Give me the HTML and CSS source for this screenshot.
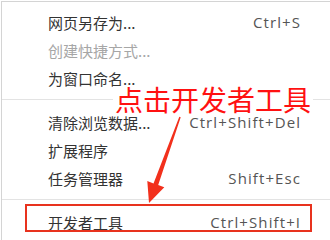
FILE: index.html
```html
<!DOCTYPE html>
<html lang="zh-CN">
<head>
<meta charset="utf-8">
<title>菜单</title>
<link rel="stylesheet" href="styles.css">
</head>
<body>
<div class="menu">
  <div class="item"><span class="label">网页另存为...</span><span class="key">Ctrl+S</span></div>
  <div class="item disabled"><span class="label">创建快捷方式...</span></div>
  <div class="item"><span class="label">为窗口命名...</span></div>
  <div class="sep"></div>
  <div class="item"><span class="label">清除浏览数据...</span><span class="key">Ctrl+Shift+Del</span></div>
  <div class="item"><span class="label">扩展程序</span></div>
  <div class="item"><span class="label">任务管理器</span><span class="key">Shift+Esc</span></div>
  <div class="sep"></div>
  <div class="item"><span class="label">开发者工具</span><span class="key">Ctrl+Shift+I</span></div>
</div>
<div class="callout">点击开发者工具</div>
<svg class="arrow" width="330" height="240" viewBox="0 0 330 240">
  <polygon points="179.3,116.8 180.7,117.2 158.2,185.0 164.3,187.3 149,203 147.3,181.1 153.5,183.4"/>
</svg>
<div class="highlight"></div>
</body>
</html>
```
FILE: styles.css
```css
html, body {
  margin: 0;
  padding: 0;
  background: #fff;
  width: 330px;
  height: 240px;
  overflow: hidden;
  position: relative;
}
.menu {
  margin: 1px 0 0 1px;
  width: 340px;
  border-top: 1px solid #d4d4d4;
  border-left: 1px solid #d4d4d4;
  padding: 6px 0 10px;
  background: #fff;
  font-family: "Noto Sans CJK SC", "Open Sans", sans-serif;
  font-size: 15px;
  color: #333;
}
.item {
  height: 28px;
  display: flex;
  align-items: center;
  justify-content: space-between;
  padding: 0 42px 0 46px;
}
.item.disabled {
  color: #a6a6a6;
}
.key {
  font-family: "Open Sans", sans-serif;
  color: #555;
  letter-spacing: 1.1px;
  margin-right: -1.1px;
}
.sep {
  height: 1px;
  background: #e3e3e3;
  margin: 7px 0 8px;
}
.callout {
  position: absolute;
  left: 113px;
  top: 86px;
  padding: 0 2px;
  background: #fff;
  font-family: "Noto Sans CJK SC", sans-serif;
  font-size: 28px;
  line-height: 26px;
  color: #ff1111;
}
.arrow {
  position: absolute;
  left: 0;
  top: 0;
}
.arrow polygon {
  fill: #f2301c;
}
.highlight {
  position: absolute;
  left: 25px;
  top: 204px;
  width: 283px;
  height: 24px;
  border: 2.5px solid #e8321e;
}
```
